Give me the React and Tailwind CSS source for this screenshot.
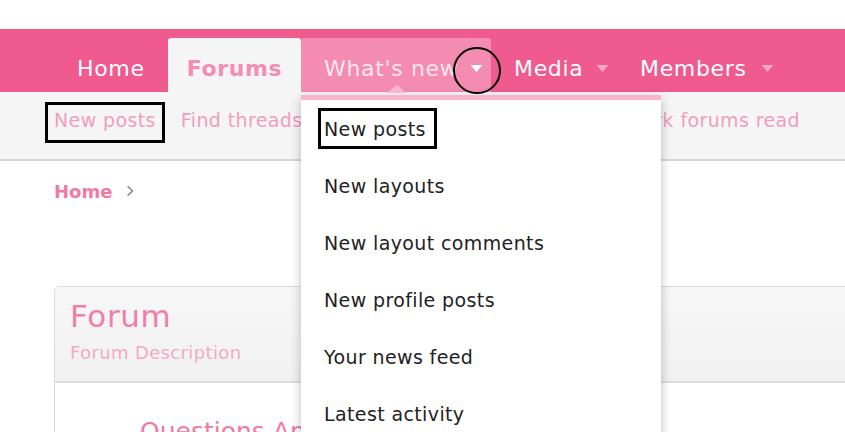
import React from 'react';

const Caret = ({ className = "" }) => (
  <svg viewBox="0 0 12 8" className={`w-[13px] h-[8px] ${className}`}>
    <path d="M0 0h12L6 7z" fill="currentColor" />
  </svg>
);

const NavTab = ({ label, active, open, caret, width }) => {
  if (active) {
    return (
      <div className={`h-[54px] flex items-center justify-center pt-[7px] ${width} bg-[#f5f5f5] rounded-t-[3px] text-[#f38db4] font-bold`}>
        {label}
      </div>
    );
  }
  return (
    <div className={`h-[54px] flex items-center pt-[7px] pl-[23px] ${width} rounded-t-[3px] ${open ? "bg-[#f48bb0] text-[#fde6ef]" : "text-white"}`}>
      <span>{label}</span>
      {caret && <Caret className={`ml-auto mr-[8px] ${open ? "text-white" : "text-[#f7a6c5]"}`} />}
    </div>
  );
};

const menuItems = [
  "New posts",
  "New layouts",
  "New layout comments",
  "New profile posts",
  "Your news feed",
  "Latest activity",
];

export default function App() {
  return (
    <div className="relative w-[845px] h-[432px] overflow-hidden bg-white font-['DejaVu_Sans',sans-serif]">
      <div className="h-[29px]" />

      {/* Main nav */}
      <nav className="h-[63px] bg-[#ef5a8f] flex items-end pl-[54px] text-[22px] tracking-[0.03em]">
        <NavTab label="Home" width="w-[114px]" />
        <NavTab label="Forums" active width="w-[133px]" />
        <NavTab label="What's new" open caret width="w-[190px]" />
        <NavTab label="Media" caret width="w-[126px]" />
        <NavTab label="Members" caret width="w-[165px]" />
      </nav>

      {/* Sub nav */}
      <div className="h-[69px] bg-[#f5f5f5] border-b-2 border-[#d6d6d6] flex items-start pt-[16px] leading-[24px] pl-[54px] pr-[45px] gap-[25px] text-[19px] tracking-[0.02em] text-[#f29dbd] whitespace-nowrap">
        <span>New posts</span>
        <span>Find threads</span>
        <span>Watched</span>
        <span className="ml-auto">Mark forums read</span>
      </div>

      {/* Content */}
      <main className="pl-[54px] pt-[18px]">
        <div className="flex items-center gap-[14px] h-[24px]">
          <span className="text-[18px] font-bold text-[#f07aa2]">Home</span>
          <svg viewBox="0 0 10 14" className="w-[8px] h-[12px] text-[#8a8a8a]">
            <path d="M2 1l6 6-6 6" fill="none" stroke="currentColor" strokeWidth="2" />
          </svg>
        </div>

        <div className="mt-[83px] w-[820px] border border-[#dcdcdc] rounded-tl-[5px] overflow-hidden">
          <div className="h-[96px] bg-gradient-to-b from-[#f7f7f7] to-[#f1f1f1] border-b-2 border-[#dddddd] px-[15px] pt-[11px]">
            <div className="text-[31px] leading-[36px] tracking-[0.02em] text-[#f07fa7]">Forum</div>
            <div className="mt-[7px] text-[18px] leading-[24px] tracking-[0.02em] text-[#f4aac6]">Forum Description</div>
          </div>
          <div className="bg-white pl-[85px] pt-[34px] h-[120px]">
            <div className="text-[25px] leading-[30px] text-[#f07aa2]">Questions And Answers</div>
          </div>
        </div>
      </main>

      {/* Dropdown menu */}
      <div className="absolute left-[301px] top-[95px] w-[360px]">
        <svg viewBox="0 0 20 8" className="absolute left-[86px] -top-[10px] w-[20px] h-[8px] text-[#f8b6cf]">
          <path d="M0 8L10 0l10 8z" fill="currentColor" />
        </svg>
        <div className="bg-white border-t-[5px] border-[#f9b3cd] shadow-[0_4px_10px_rgba(0,0,0,0.25)] pt-[1px] text-[19px] tracking-[0.02em] text-[#222222]">
          {menuItems.map((item) => (
            <div key={item} className="h-[57px] flex items-center pl-[23px]">
              {item}
            </div>
          ))}
        </div>
      </div>

      {/* Annotations */}
      <div className="absolute left-[45px] top-[102px] w-[120px] h-[41px] border-[3px] border-black" />
      <div className="absolute left-[318px] top-[108px] w-[119px] h-[41px] border-[3px] border-black" />
      <div className="absolute left-[453px] top-[47px] w-[48px] h-[47px] rounded-full border-2 border-black" />
    </div>
  );
}
